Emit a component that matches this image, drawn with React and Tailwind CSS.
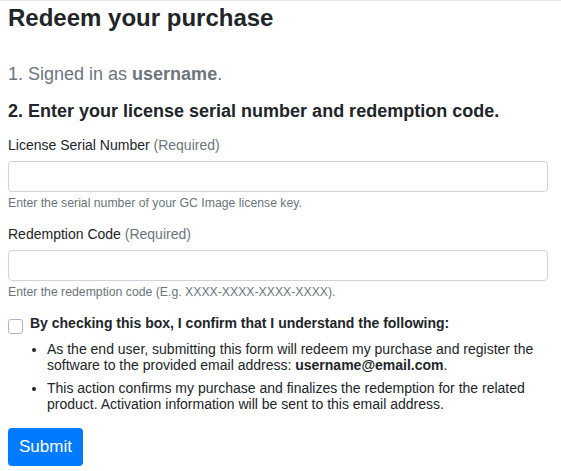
export default function App() {
    return (
        <div className="min-h-screen bg-white border-t border-[#e6e6e6] pl-2 pr-[13px] font-['Liberation_Sans',Arial,sans-serif] text-[#212529]">
            <h1 className="mt-[3px] text-[24px] leading-[1.2] font-bold">Redeem your purchase</h1>

            <p className="mt-[30px] text-[18px] leading-[22px] text-[#6c757d]">
                1. Signed in as <b>username</b>.
            </p>
            <p className="mt-[15px] text-[18px] leading-[22px] font-bold">
                2. Enter your license serial number and redemption code.
            </p>

            <form>
                <label className="mt-[13px] block text-[14px] leading-[20px]">
                    License Serial Number <span className="text-[#6c757d]">(Required)</span>
                </label>
                <input type="text" className="mt-[6px] block h-[31px] w-full rounded-[4px] border border-[#ced4da] px-3 text-[14px] outline-none" />
                <small className="mt-[3px] block text-[12.25px] leading-[16px] text-[#6c757d]">
                    Enter the serial number of your GC Image license key.
                </small>

                <label className="mt-[13px] block text-[14px] leading-[20px]">
                    Redemption Code <span className="text-[#6c757d]">(Required)</span>
                </label>
                <input type="text" className="mt-[6px] block h-[31px] w-full rounded-[4px] border border-[#ced4da] px-3 text-[14px] outline-none" />
                <small className="mt-[3px] block text-[12.25px] leading-[16px] text-[#6c757d]">
                    Enter the redemption code (E.g. XXXX-XXXX-XXXX-XXXX).
                </small>

                <div className="mt-[13px] flex items-start gap-[7px]">
                    <input type="checkbox" className="mt-[6px] h-[15px] w-[15px] appearance-none rounded-[3px] border border-[#adb5bd] bg-white" />
                    <label className="text-[14px] leading-[20px] font-bold">
                        By checking this box, I confirm that I understand the following:
                    </label>
                </div>
                <ul className="mt-[7px] list-disc pl-[39px] text-[14px] leading-[16px]">
                    <li className="mb-[7px]">
                        <span className="whitespace-nowrap">As the end user, submitting this form will redeem my purchase and register the</span>
                        <br />
                        software to the provided email address: <b>username@email.com</b>.
                    </li>
                    <li>
                        This action confirms my purchase and finalizes the redemption for the related product. Activation information will be sent to this email address.
                    </li>
                </ul>

                <button type="button" className="mt-[16px] h-[38px] w-[75px] rounded-[4px] bg-[#007bff] text-[17px] text-white">
                    Submit
                </button>
            </form>
        </div>
    );
}
